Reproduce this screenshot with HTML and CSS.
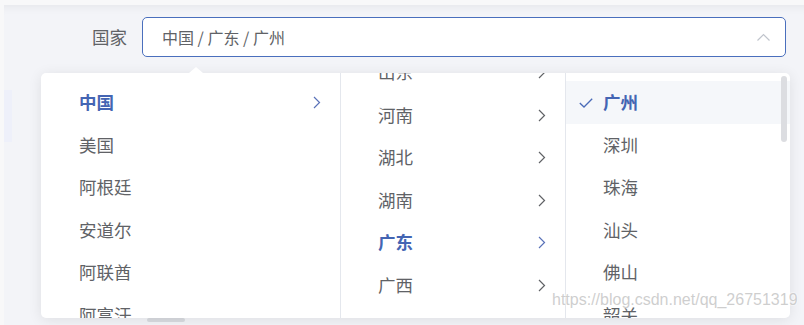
FILE: index.html
```html
<html>
    <head>
        <title>级联选择</title>
        <link rel="stylesheet" href="styles.css">
    </head>
    <body>
        <div class="page">
            <!-- form row -->
            <div class="form-row">
                <label class="form-label">国家</label>
                <div class="cascader-input">
                    <span class="input-text">中国 / 广东 / 广州</span>
                    <svg class="arrow-up" width="13" height="8" viewBox="0 0 13 8">
                        <polyline points="0.5,7.5 6.5,1.5 12.5,7.5" fill="none" stroke="#c0c4cc" stroke-width="1.2"/>
                    </svg>
                </div>
            </div>

            <div class="switch-row">
                <span class="switch"></span>
            </div>

            <!-- dropdown panel -->
            <div class="cascader-panel">
                <span class="popper-arrow"></span>

                <ul class="menu menu-country">
                    <li class="node active">中国<svg class="chev" width="8" height="13" viewBox="0 0 8 13"><polyline points="1,1 6.5,6.5 1,12" fill="none" stroke="#5a72b8" stroke-width="1.2"/></svg></li>
                    <li class="node">美国</li>
                    <li class="node">阿根廷</li>
                    <li class="node">安道尔</li>
                    <li class="node">阿联酋</li>
                    <li class="node">阿富汗</li>
                </ul>

                <ul class="menu menu-province">
                    <li class="node">山东<svg class="chev" width="8" height="13" viewBox="0 0 8 13"><polyline points="1,1 6.5,6.5 1,12" fill="none" stroke="#606266" stroke-width="1.2"/></svg></li>
                    <li class="node">河南<svg class="chev" width="8" height="13" viewBox="0 0 8 13"><polyline points="1,1 6.5,6.5 1,12" fill="none" stroke="#606266" stroke-width="1.2"/></svg></li>
                    <li class="node">湖北<svg class="chev" width="8" height="13" viewBox="0 0 8 13"><polyline points="1,1 6.5,6.5 1,12" fill="none" stroke="#606266" stroke-width="1.2"/></svg></li>
                    <li class="node">湖南<svg class="chev" width="8" height="13" viewBox="0 0 8 13"><polyline points="1,1 6.5,6.5 1,12" fill="none" stroke="#606266" stroke-width="1.2"/></svg></li>
                    <li class="node active">广东<svg class="chev" width="8" height="13" viewBox="0 0 8 13"><polyline points="1,1 6.5,6.5 1,12" fill="none" stroke="#5a72b8" stroke-width="1.2"/></svg></li>
                    <li class="node">广西<svg class="chev" width="8" height="13" viewBox="0 0 8 13"><polyline points="1,1 6.5,6.5 1,12" fill="none" stroke="#606266" stroke-width="1.2"/></svg></li>
                </ul>

                <ul class="menu menu-city">
                    <li class="node active checked"><svg class="check" width="14" height="10" viewBox="0 0 14 10"><polyline points="0.8,5 5,9 13.2,0.8" fill="none" stroke="#4a6bb8" stroke-width="1.3"/></svg>广州</li>
                    <li class="node">深圳</li>
                    <li class="node">珠海</li>
                    <li class="node">汕头</li>
                    <li class="node">佛山</li>
                    <li class="node">韶关</li>
                    <span class="scrollbar"></span>
                </ul>

                <span class="watermark">https://blog.csdn.net/qq_26751319</span>
            </div>
        </div>
    </body>
</html>
```

FILE: styles.css
```css
body {
    margin: 0;
    background: #f8f8f9;
    font-family: "Noto Sans CJK SC", "Microsoft YaHei", sans-serif;
    color: #606266;
}

.page {
    position: relative;
    height: 320px;
    margin: 5px 0 0 4px;
    background:
        linear-gradient(#eef0fa, #eef0fa) 0 85px / 8px 52px no-repeat,
        linear-gradient(#f3f4f8, #f3f4f8);
    box-shadow: inset 0 10px 10px -8px rgba(0, 0, 0, 0.06);
    overflow: hidden;
}

.form-row {
    display: flex;
    align-items: center;
    padding-top: 12px;
}

.form-label {
    width: 138px;
    padding-right: 15px;
    box-sizing: border-box;
    text-align: right;
    font-size: 17.5px;
    line-height: 40px;
    color: #606266;
}

.cascader-input {
    display: flex;
    align-items: center;
    justify-content: space-between;
    width: 644px;
    height: 40px;
    padding: 0 15px 0 19px;
    box-sizing: border-box;
    background: #fff;
    border: 1px solid #4a6fbd;
    border-radius: 5px;
    font-size: 16px;
    color: #606266;
}

.arrow-up {
    display: block;
}

.switch-row {
    padding: 261px 0 0 143px;
}

.switch {
    display: block;
    width: 38px;
    height: 4px;
    border-radius: 2px;
    background: #d9dbe0;
}

.cascader-panel {
    position: absolute;
    left: 37px;
    top: 68px;
    width: 749px;
    height: 245px;
    display: flex;
    background: #fff;
    border-radius: 5px;
    box-shadow: 0 2px 14px rgba(0, 0, 0, 0.09);
}

.popper-arrow {
    position: absolute;
    left: 148px;
    top: -6px;
    width: 0;
    height: 0;
    border-left: 7px solid transparent;
    border-right: 7px solid transparent;
    border-bottom: 6px solid #fff;
}

.menu {
    position: relative;
    margin: 0;
    padding: 8px 0 0 0;
    list-style: none;
    overflow: hidden;
    box-sizing: border-box;
    height: 245px;
}

.menu-country {
    width: 300px;
    border-right: 1px solid #e4e7ed;
}

.menu-province {
    width: 225px;
    padding-top: 0;
    border-right: 1px solid #e4e7ed;
}

.menu-province .node:first-child {
    margin-top: -22px;
}

.menu-city {
    width: 224px;
}

.node {
    position: relative;
    height: 42.5px;
    line-height: 42.5px;
    padding: 0 30px 0 38px;
    font-size: 17.5px;
    color: #606266;
}

.menu-province .node,
.menu-city .node {
    padding-left: 37px;
}

.node.active {
    color: #4465b3;
    font-weight: bold;
}

.node.checked {
    background: #f5f7fa;
}

.chev {
    position: absolute;
    right: 19px;
    top: 15px;
}

.check {
    position: absolute;
    left: 13px;
    top: 17px;
}

.scrollbar {
    position: absolute;
    right: 3px;
    top: 3px;
    width: 6px;
    height: 66px;
    border-radius: 3px;
    background: #dcdde1;
}

.watermark {
    position: absolute;
    left: 511px;
    top: 218px;
    font-family: "Liberation Sans", Arial, sans-serif;
    font-size: 16px;
    color: rgba(190, 190, 190, 0.75);
    text-shadow: 0 0 2px #fff, 0 0 2px #fff;
    white-space: nowrap;
    pointer-events: none;
}
```
